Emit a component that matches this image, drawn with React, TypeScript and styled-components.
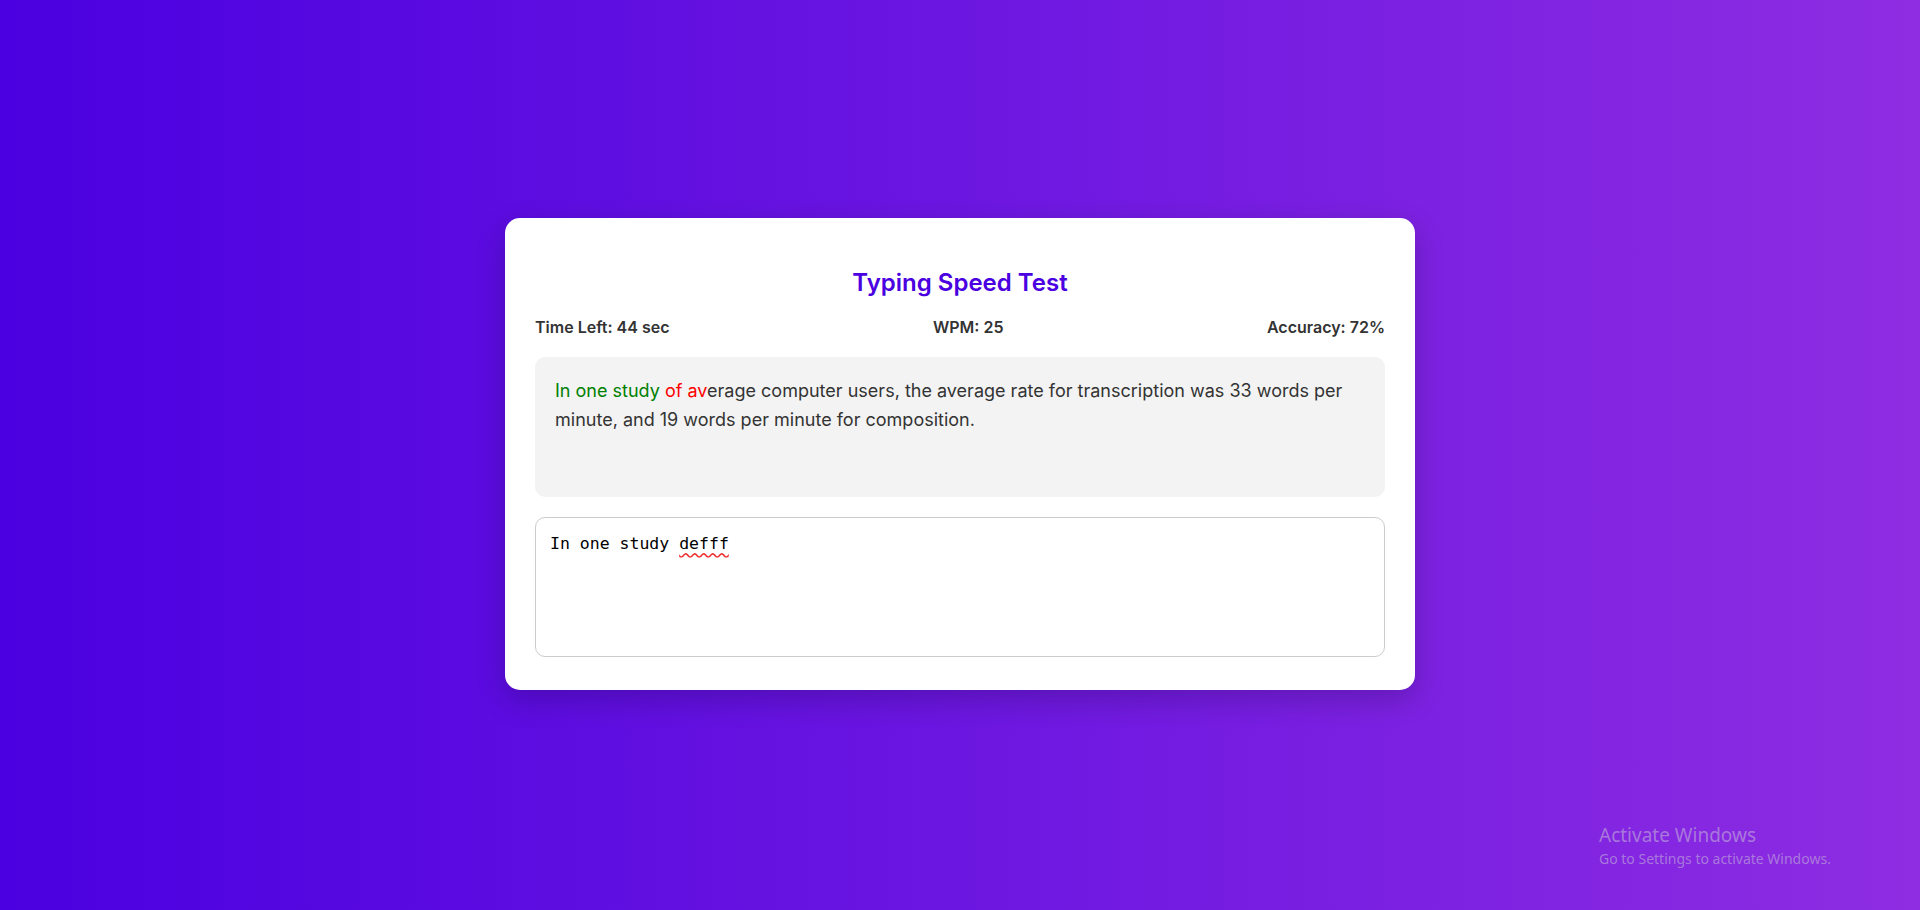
import React from 'react'
import styled, { createGlobalStyle } from 'styled-components'

const GlobalStyle = createGlobalStyle`
  * {
    box-sizing: border-box;
  }
  body {
    margin: 0;
    font-family: 'Inter', 'Liberation Sans', sans-serif;
  }
`

const Page = styled.div`
  min-height: 910px;
  background: linear-gradient(to right, #4a00e0, #8e2de2);
  display: flex;
  align-items: center;
  justify-content: center;
  position: relative;
`

const Card = styled.div`
  width: 910px;
  background: #fff;
  border-radius: 15px;
  padding: 30px;
  margin-bottom: 2px;
  box-shadow: 0 10px 30px rgba(0, 0, 0, 0.2);
`

const Title = styled.h2`
  margin: 20px 0;
  font-size: 24px;
  font-weight: 600;
  color: #4a00e0;
  text-align: center;
`

const Stats = styled.div`
  display: flex;
  justify-content: space-between;
  margin-bottom: 20px;
  font-size: 16px;
  font-weight: 600;
  color: #333;
`

const Quote = styled.div`
  background: #f3f3f3;
  border-radius: 10px;
  padding: 20px;
  min-height: 140px;
  font-size: 18px;
  line-height: 1.6;
  color: #333;
  margin-bottom: 20px;
`

const Char = styled.span<{ $state: 'ok' | 'bad' | 'todo' }>`
  color: ${p => (p.$state === 'ok' ? 'green' : p.$state === 'bad' ? 'red' : 'inherit')};
`

// textarea look-alike so the spell-check squiggle can be drawn
const InputBox = styled.div`
  width: 100%;
  height: 140px;
  border: 1px solid #ccc;
  border-radius: 10px;
  padding: 14px 14px;
  margin-bottom: 3px;
  font-family: 'DejaVu Sans Mono', 'Liberation Mono', monospace;
  font-size: 16.5px;
  line-height: 1.4;
  color: #000;
  white-space: pre-wrap;
`

const Typo = styled.span`
  text-decoration: underline wavy #e33;
  text-underline-offset: 3px;
`

const Watermark = styled.div`
  position: absolute;
  left: 1599px;
  top: 822px;
  font-family: 'Noto Sans', 'Open Sans', sans-serif;
  color: rgba(200, 190, 215, 0.55);
  div:first-child {
    font-size: 19px;
  }
  div:last-child {
    font-size: 14px;
    margin-top: 1px;
  }
`

const quote =
  'In one study of average computer users, the average rate for transcription was 33 words per minute, and 19 words per minute for composition.'

const typed = 'In one study defff'

export default function App() {
  return (
    <Page>
      <GlobalStyle />
      <Card>
        <Title>Typing Speed Test</Title>
        <Stats>
          <span>Time Left: 44 sec</span>
          <span>WPM: 25</span>
          <span>Accuracy: 72%</span>
        </Stats>
        <Quote>
          {quote.split('').map((c, i) => {
            const state = i >= typed.length ? 'todo' : typed[i] === c ? 'ok' : 'bad'
            return (
              <Char key={i} $state={state}>
                {c}
              </Char>
            )
          })}
        </Quote>
        <InputBox role="textbox">
          In one study <Typo>defff</Typo>
        </InputBox>
      </Card>
      <Watermark>
        <div>Activate Windows</div>
        <div>Go to Settings to activate Windows.</div>
      </Watermark>
    </Page>
  )
}
